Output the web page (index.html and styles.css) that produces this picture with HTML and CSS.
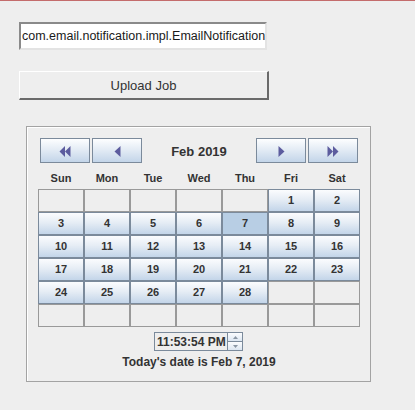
FILE: index.html
```html
<!DOCTYPE html>
<html>
<head>
<meta charset="utf-8">
<link rel="stylesheet" href="styles.css">
</head>
<body>
<div class="top-rule"></div>
<div class="form">
  <div class="textfield">com.email.notification.impl.EmailNotification</div>
  <div class="button">Upload Job</div>
  <div class="panel">
    <div class="nav">
      <div class="navgroup">
        <div class="navbtn"><svg width="12" height="11" viewBox="0 0 12 11"><path d="M6 0 L6 11 L0.5 5.5 Z" class="tri"/><path d="M11.5 0 L11.5 11 L6 5.5 Z" class="tri"/></svg></div>
        <div class="navbtn"><svg width="7" height="11" viewBox="0 0 7 11"><path d="M6.5 0 L6.5 11 L0.5 5.5 Z" class="tri"/></svg></div>
      </div>
      <div class="title">Feb 2019</div>
      <div class="navgroup">
        <div class="navbtn"><svg width="7" height="11" viewBox="0 0 7 11"><path d="M0.5 0 L0.5 11 L6.5 5.5 Z" class="tri"/></svg></div>
        <div class="navbtn"><svg width="12" height="11" viewBox="0 0 12 11"><path d="M0.5 0 L0.5 11 L6 5.5 Z" class="tri"/><path d="M6 0 L6 11 L11.5 5.5 Z" class="tri"/></svg></div>
      </div>
    </div>
    <div class="days">
      <span>Sun</span><span>Mon</span><span>Tue</span><span>Wed</span><span>Thu</span><span>Fri</span><span>Sat</span>
    </div>
    <div class="grid">
      <div class="cell empty"></div><div class="cell empty"></div><div class="cell empty"></div><div class="cell empty"></div><div class="cell empty"></div><div class="cell day">1</div><div class="cell day">2</div>
      <div class="cell day">3</div><div class="cell day">4</div><div class="cell day">5</div><div class="cell day">6</div><div class="cell day sel">7</div><div class="cell day">8</div><div class="cell day">9</div>
      <div class="cell day">10</div><div class="cell day">11</div><div class="cell day">12</div><div class="cell day">13</div><div class="cell day">14</div><div class="cell day">15</div><div class="cell day">16</div>
      <div class="cell day">17</div><div class="cell day">18</div><div class="cell day">19</div><div class="cell day">20</div><div class="cell day">21</div><div class="cell day">22</div><div class="cell day">23</div>
      <div class="cell day">24</div><div class="cell day">25</div><div class="cell day">26</div><div class="cell day">27</div><div class="cell day">28</div><div class="cell empty"></div><div class="cell empty"></div>
      <div class="cell empty"></div><div class="cell empty"></div><div class="cell empty"></div><div class="cell empty"></div><div class="cell empty"></div><div class="cell empty"></div><div class="cell empty"></div>
    </div>
    <div class="timerow">
      <div class="timefield">11:53:54 PM</div>
      <div class="spinner">
        <div class="spin"><svg width="5" height="3" viewBox="0 0 5 3"><path d="M0 3 L2.5 0 L5 3 Z" fill="#8a96a4"/></svg></div>
        <div class="spin"><svg width="5" height="3" viewBox="0 0 5 3"><path d="M0 0 L2.5 3 L5 0 Z" fill="#8a96a4"/></svg></div>
      </div>
    </div>
    <div class="today">Today's date is Feb 7, 2019</div>
  </div>
</div>
</body>
</html>
```
FILE: styles.css
```css
html, body {
  margin: 0;
  padding: 0;
  background: #eeeeee;
  font-family: "Liberation Sans", Arial, sans-serif;
  color: #333333;
}
.top-rule {
  height: 1px;
  background: #c46c6c;
}
.form {
  display: flex;
  flex-direction: column;
  align-items: flex-start;
  padding-left: 19px;
}
.textfield {
  margin-top: 21px;
  width: 243px;
  height: 24px;
  background: #ffffff;
  border-top: 2px solid #8a8a8a;
  border-left: 2px solid #8a8a8a;
  border-bottom: 2px solid #e3e3e3;
  border-right: 2px solid #e3e3e3;
  font-size: 12.5px;
  line-height: 24px;
  padding-left: 1px;
  color: #1a1a1a;
  white-space: nowrap;
  overflow: hidden;
  box-sizing: content-box;
}
.button {
  margin-top: 21px;
  width: 247px;
  height: 26px;
  border-top: 1px solid #ffffff;
  border-left: 1px solid #ffffff;
  border-bottom: 2px solid #6a6a6a;
  border-right: 2px solid #6a6a6a;
  background: #eeeeee;
  font-size: 13px;
  line-height: 27px;
  text-align: center;
  color: #333333;
}
.panel {
  margin-top: 26px;
  margin-left: 7px;
  width: 322px;
  height: 243px;
  border: 1px solid #a3a3a3;
  box-shadow: inset 1px 1px 0 #ffffff;
  padding: 11px 10px 0 11px;
  box-sizing: content-box;
  display: flex;
  flex-direction: column;
}
.nav {
  display: flex;
  align-items: center;
  justify-content: space-between;
  padding: 0 2px;
  height: 25px;
}
.navgroup {
  display: flex;
  gap: 2px;
}
.navbtn {
  width: 48px;
  height: 23px;
  border: 1px solid #7b8a9b;
  background: linear-gradient(#fdfeff, #e4ecf5 45%, #c3d5e9);
  display: flex;
  align-items: center;
  justify-content: center;
}
.navbtn svg {
  margin-top: 1px;
}
.tri {
  fill: #5c5c9e;
}
.title {
  font-weight: bold;
  font-size: 13px;
  color: #333333;
  margin-top: 2px;
}
.days {
  display: grid;
  grid-template-columns: repeat(7, 46px);
  margin-top: 9px;
  height: 17px;
  font-size: 11px;
  font-weight: bold;
  text-align: center;
  line-height: 13px;
  color: #333333;
}
.grid {
  display: grid;
  grid-template-columns: repeat(7, 46px);
  grid-auto-rows: 23px;
}
.cell {
  border: 1px solid #999999;
  box-sizing: border-box;
  font-size: 11px;
  font-weight: bold;
  text-align: center;
  line-height: 21px;
  color: #333333;
}
.day {
  border-color: #7b8a9b;
  background: linear-gradient(#fbfcfe, #e6edf5 45%, #c3d5e9);
}
.day.sel {
  background: #b8cee4;
}
.empty {
  background: #eeeeee;
}
.timerow {
  display: flex;
  justify-content: center;
  margin-top: 5px;
  padding-right: 1px;
}
.timefield {
  height: 17px;
  width: 70px;
  border: 1px solid #7b8a9b;
  background: #eeeeee;
  font-size: 12px;
  font-weight: bold;
  line-height: 18px;
  padding-left: 2px;
  color: #333333;
  white-space: nowrap;
  overflow: hidden;
  box-sizing: content-box;
}
.spinner {
  display: flex;
  flex-direction: column;
  width: 15px;
  height: 19px;
}
.spin {
  flex: 1;
  border: 1px solid #7b8a9b;
  border-left: none;
  background: linear-gradient(#fbfcfe, #dce6f1);
  display: flex;
  align-items: center;
  justify-content: center;
}
.spin + .spin {
  border-top: none;
}
.today {
  margin-top: 4px;
  text-align: center;
  font-size: 12px;
  font-weight: bold;
  color: #333333;
}
```
